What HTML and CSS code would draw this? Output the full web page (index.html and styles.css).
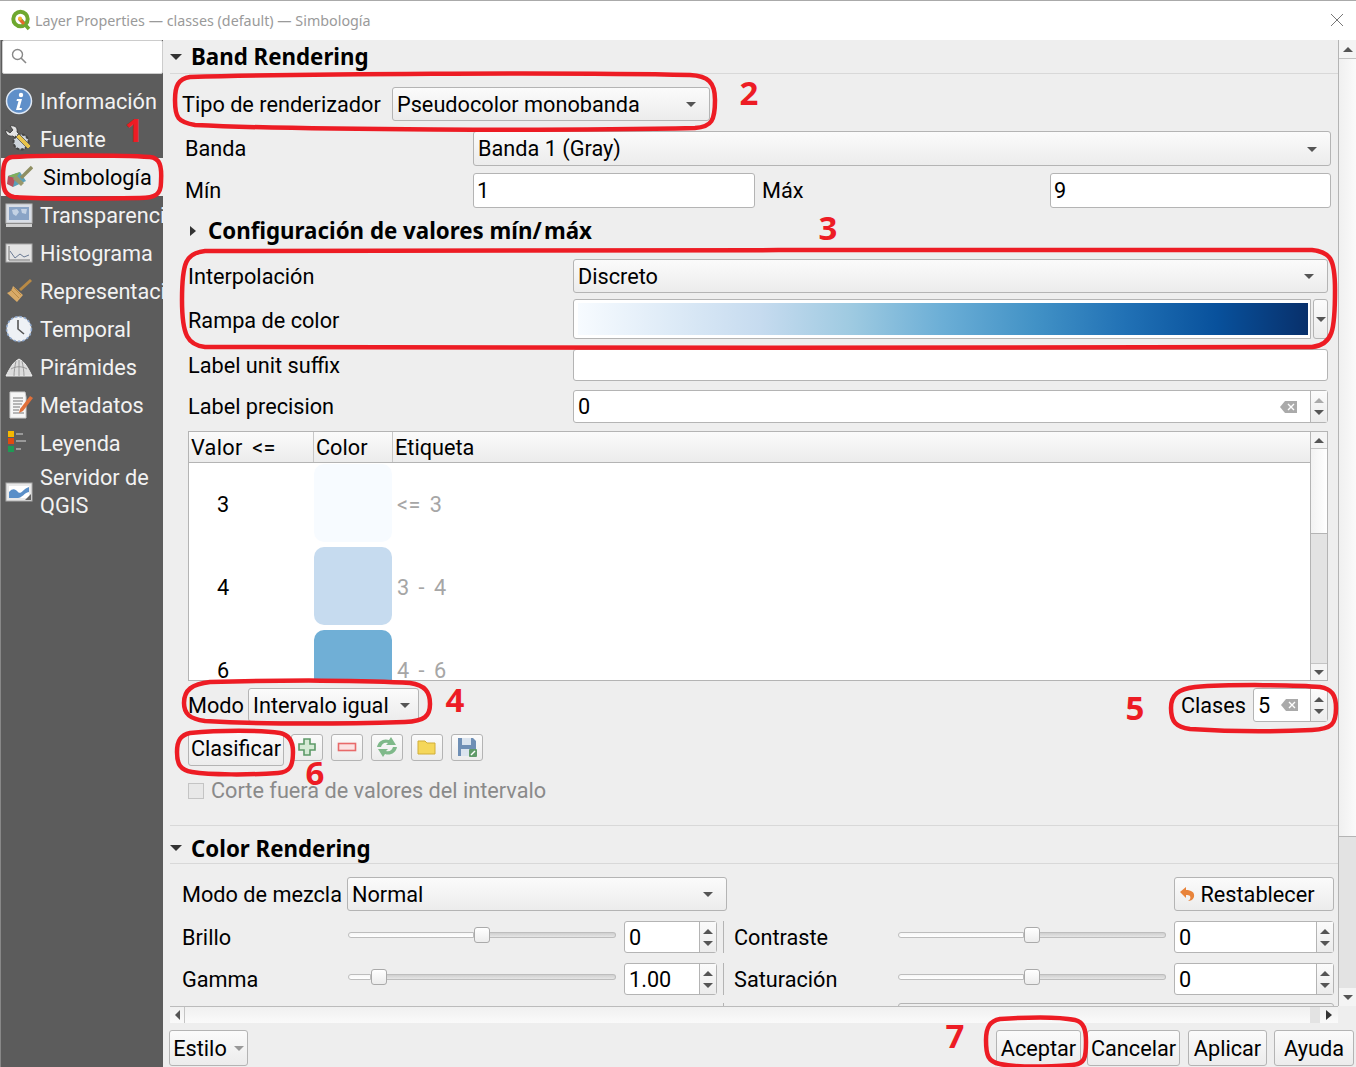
FILE: index.html
```html
<!DOCTYPE html>
<html lang="es">
<head>
    <meta charset="UTF-8">
    <title>Layer Properties</title>
    <link rel="stylesheet" href="styles.css">
</head>
<body>
<div class="window">
    <div class="titlebar">
        <svg class="qgis" width="22" height="22" viewBox="0 0 22 22">
            <circle cx="10.5" cy="10" r="7.2" fill="none" stroke="#6ea82e" stroke-width="4"/>
            <path d="M10 10l9 10" stroke="#6ea82e" stroke-width="3.5"/>
            <path d="M9 9.5l5 5.5" stroke="#e8692c" stroke-width="3"/>
            <circle cx="10" cy="9.5" r="2" fill="#f2b632"/>
        </svg>
        <span class="title">Layer Properties — classes (default) — Simbología</span>
        <svg class="close" width="14" height="14" viewBox="0 0 14 14"><path d="M1 1l12 12M13 1L1 13" stroke="#777" fill="none"/></svg>
    </div>
    <div class="dialog">
        <div class="sidebar">
            <div class="search">
                <svg width="18" height="18" viewBox="0 0 18 18"><circle cx="7.5" cy="7.5" r="5" fill="none" stroke="#888" stroke-width="1.4"/><path d="M11 11l5 5" stroke="#888" stroke-width="1.6"/></svg>
            </div>
            <ul class="menu">
                <li>
                    <svg class="ico" viewBox="0 0 28 28"><circle cx="14" cy="14" r="12.5" fill="#5f8fc9" stroke="#dfe8f4" stroke-width="1.5"/><circle cx="16" cy="8" r="2.2" fill="#fff"/><path d="M12 12h5l-2.5 9h2.5l-.6 2h-5.4l2.5-9h-2z" fill="#fff"/></svg>
                    <span>Información</span>
                </li>
                <li>
                    <svg class="ico" viewBox="0 0 28 28"><path d="M1 5l4 3 3-3-3-4c4-1 8 1 7 6l6 6-4 4-6-6C4 12 0 9 1 5z" fill="#e4e4e4" stroke="#333" stroke-width=".8"/><circle cx="16" cy="17" r="7.5" fill="#cfd6dd" stroke="#444" stroke-dasharray="3 1.5" stroke-width="2"/><path d="M11 12l12 12 3-3-12-12z" fill="#e8c34a" stroke="#555" stroke-width=".8"/></svg>
                    <span>Fuente</span>
                </li>
                <li class="selected">
                    <svg class="ico" viewBox="0 0 28 28"><path d="M3 13l12-4 6 9-13 6z" fill="#5aa0b8"/><path d="M3 13l7 2-2 9-6-3z" fill="#b8505c"/><path d="M3 13l12-4-4 6z" fill="#7fb05a"/><path d="M16 15L27 4" stroke="#8f8f62" stroke-width="3.4"/><path d="M11 12l8 8-3 3-8-7z" fill="#99986c"/></svg>
                    <span>Simbología</span>
                </li>
                <li>
                    <svg class="ico" viewBox="0 0 28 28"><rect x="1" y="3" width="26" height="19" fill="#d9dee6" stroke="#bbb"/><path d="M4 6h20v13H4z" fill="#8aa4c6"/><path d="M7 9l5-1 2 3-3 4-3-2zM16 8h6l-1 5-4-1z" fill="#c4d2e4"/><rect x="1" y="23" width="26" height="3" fill="#d0d0d0"/></svg>
                    <span>Transparencia</span>
                </li>
                <li>
                    <svg class="ico" viewBox="0 0 28 28"><rect x="1" y="5" width="26" height="18" fill="#e4e4e4" stroke="#aaa"/><path d="M4 7v14h21" fill="none" stroke="#777"/><path d="M5 12l5 7 5-4 4 3 5-2" fill="none" stroke="#6a7a94"/></svg>
                    <span>Histograma</span>
                </li>
                <li>
                    <svg class="ico" viewBox="0 0 28 28"><path d="M15 13L26 3" stroke="#b98a45" stroke-width="3"/><path d="M8 9l10 9-6 7-10-9c3-1 5-3 6-7z" fill="#d8aa68"/><path d="M6 13l8 8M9 11l7 7" stroke="#b98a45"/></svg>
                    <span>Representación</span>
                </li>
                <li>
                    <svg class="ico" viewBox="0 0 28 28"><circle cx="14" cy="14" r="12.4" fill="#eef1f5" stroke="#8fa8cc" stroke-width="1.6" stroke-dasharray="2.5 2"/><path d="M13 5v9l6 5" fill="none" stroke="#555" stroke-width="1.6"/></svg>
                    <span>Temporal</span>
                </li>
                <li>
                    <svg class="ico" viewBox="0 0 28 28"><path d="M1 23C4 17 7 11 11 8l3-2 3 2c4 3 7 9 10 15z" fill="#dcdcdc" stroke="#eee"/><path d="M11 8c-1 5-2 10-2 15M17 8c1 5 2 10 2 15M6 16c5-3 11-3 16 0M14 7v16" stroke="#8c8c8c" stroke-width=".8" fill="none"/></svg>
                    <span>Pirámides</span>
                </li>
                <li>
                    <svg class="ico" viewBox="0 0 28 28"><path d="M5 1h15l1 5v21H5z" fill="#f6f6f6" stroke="#ccc"/><path d="M8 7h10M8 10h10M8 13h9M8 16h7M8 19h6M8 22h11" stroke="#777"/><path d="M15 18L25 5l3 2-10 13-4 2z" fill="#e0703a"/></svg>
                    <span>Metadatos</span>
                </li>
                <li>
                    <svg class="ico" viewBox="0 0 28 28"><rect x="3" y="2" width="6" height="6" fill="#f5b800"/><rect x="3" y="9" width="6" height="6" fill="#e04a10"/><rect x="3" y="17" width="6" height="6" fill="#1f9a55"/><path d="M11 5h7M11 12h10M11 20h5" stroke="#999" stroke-width="2"/></svg>
                    <span>Leyenda</span>
                </li>
                <li class="two-lines">
                    <svg class="ico" viewBox="0 0 28 28"><rect x="1" y="5" width="26" height="18" fill="#e9e9e9" stroke="#aaa"/><path d="M4 8h20v12H4z" fill="#fff"/><path d="M4 14c4-4 6-3 9 0s5-3 11-5v5c-5 1-7 6-11 6H4z" fill="#5a8fc8"/><path d="M20 22l6-6v6z" fill="#666"/></svg>
                    <span>Servidor de QGIS</span>
                </li>
            </ul>
        </div>
        <div class="content">
            <div class="scroll-area">
                <div class="panel">
                    <div class="group-title first"><i class="tri-down big"></i><b>Band Rendering</b></div>

                    <div class="row h34 mt13 in-tipo">
                        <label class="lb-tipo">Tipo de renderizador</label>
                        <div class="select sel-tipo">Pseudocolor monobanda<i class="tri-down"></i></div>
                    </div>
                    <div class="row h35 mt10 in-band">
                        <label class="lb-band">Banda</label>
                        <div class="select grow">Banda 1 (Gray)<i class="tri-down"></i></div>
                    </div>
                    <div class="row h35 mt7 in-band">
                        <label class="lb-band">Mín</label>
                        <div class="input inp-min">1</div>
                        <label class="lb-max">Máx</label>
                        <div class="input grow">9</div>
                    </div>
                    <div class="row h23 mt11 in-conf"><i class="tri-right"></i><b>Configuración de valores mín/&#8202;máx</b></div>

                    <div class="row h34 mt17 in-int">
                        <label class="lb-int">Interpolación</label>
                        <div class="select grow">Discreto<i class="tri-down"></i></div>
                    </div>
                    <div class="row h40 mt6 in-int">
                        <label class="lb-int lb-ramp">Rampa de color</label>
                        <div class="ramp"><div class="ramp-fill"></div></div>
                        <div class="ramp-btn"><i class="tri-down"></i></div>
                    </div>
                    <div class="row h32 mt10 in-int">
                        <label class="lb-int">Label unit suffix</label>
                        <div class="input grow"></div>
                    </div>
                    <div class="row h33 mt9 in-int">
                        <label class="lb-int">Label precision</label>
                        <div class="input grow spin">
                            <span class="spin-val">0</span>
                            <svg class="clear" width="18" height="14" viewBox="0 0 18 14"><path d="M5 1h12v12H5L0 7z" fill="#aaa"/><path d="M8 4l6 6M14 4l-6 6" stroke="#fff" stroke-width="1.4"/></svg>
                            <div class="spin-btns"><i class="tri-up gray"></i><i class="tri-down"></i></div>
                        </div>
                    </div>

                    <div class="table mt8 in-int">
                        <div class="table-main">
                            <div class="thead">
                                <div class="th col-val">Valor &lt;=</div>
                                <div class="th col-color">Color</div>
                                <div class="th col-label">Etiqueta</div>
                            </div>
                            <div class="tbody">
                                <div class="tr"><div class="col-val td-val">3</div><div class="col-color"><div class="swatch c1"></div></div><div class="td-label">&lt;= 3</div></div>
                                <div class="tr"><div class="col-val td-val">4</div><div class="col-color"><div class="swatch c2"></div></div><div class="td-label">3 - 4</div></div>
                                <div class="tr"><div class="col-val td-val">6</div><div class="col-color"><div class="swatch c3"></div></div><div class="td-label">4 - 6</div></div>
                            </div>
                        </div>
                        <div class="vbar">
                            <div class="vbar-btn top"><i class="tri-up"></i></div>
                            <div class="vbar-thumb"></div>
                            <div class="vbar-track"></div>
                            <div class="vbar-btn bottom"><i class="tri-down"></i></div>
                        </div>
                    </div>

                    <div class="row h34 mt7 in-int">
                        <label class="lb-modo">Modo</label>
                        <div class="select sel-modo">Intervalo igual<i class="tri-down"></i></div>
                        <label class="lb-clases">Clases</label>
                        <div class="input spin spin-clases">
                            <span class="spin-val">5</span>
                            <svg class="clear" width="18" height="14" viewBox="0 0 18 14"><path d="M5 1h12v12H5L0 7z" fill="#aaa"/><path d="M8 4l6 6M14 4l-6 6" stroke="#fff" stroke-width="1.4"/></svg>
                            <div class="spin-btns"><i class="tri-up"></i><i class="tri-down"></i></div>
                        </div>
                    </div>
                    <div class="row h35 mt9 in-int">
                        <div class="btn btn-class">Clasificar</div>
                        <div class="tool">
                            <svg width="20" height="20" viewBox="0 0 20 20"><path d="M7 2h6v5h5v6h-5v5H7v-5H2V7h5z" fill="#d5ead5" stroke="#5d9a68" stroke-width="1.6"/></svg>
                        </div>
                        <div class="tool">
                            <svg width="20" height="20" viewBox="0 0 20 20"><rect x="1.5" y="6.5" width="17" height="7" fill="#fbe3e3" stroke="#e86a6a" stroke-width="1.6"/></svg>
                        </div>
                        <div class="tool">
                            <svg width="24" height="22" viewBox="0 0 24 22"><path d="M2 11C3 5 9 2 14 4l2-3 5 8H11l2-2C9 6 7 8 6 11z" fill="#7fb98a"/><path d="M22 11c-1 6-7 9-12 7l-2 3-5-8h10l-2 2c4 1 6-1 7-4z" fill="#7fb98a"/></svg>
                        </div>
                        <div class="tool">
                            <svg width="20" height="20" viewBox="0 0 20 20"><path d="M1 4h7l2 2h8v11H1z" fill="#f5d75a" stroke="#d1ae39"/></svg>
                        </div>
                        <div class="tool">
                            <svg width="20" height="20" viewBox="0 0 20 20"><path d="M1 1h15l3 3v15H1z" fill="#6f8fb5"/><path d="M5 1h9v7H5z" fill="#dbe4ee"/><path d="M4 12h10v7H4z" fill="#dbe4ee"/><rect x="12" y="12" width="8" height="8" rx="1" fill="#5f9a68"/><path d="M14 18l4-4" stroke="#fff" stroke-width="1.5"/></svg>
                        </div>
                    </div>
                    <div class="row h23 mt13 in-int disabled">
                        <i class="check"></i><span>Corte fuera de valores del intervalo</span>
                    </div>

                    <div class="group-title second"><i class="tri-down big"></i><b>Color Rendering</b></div>

                    <div class="row h34 mt13 in-color">
                        <label class="lb-mix">Modo de mezcla</label>
                        <div class="select sel-mix">Normal<i class="tri-down"></i></div>
                        <div class="btn btn-reset">
                            <svg width="18" height="16" viewBox="0 0 18 16"><path d="M1 6l6-5v3c5 0 9 2 8 7-1 3-4 4-6 4 2-1 3-3 2-5-1-1-2-1-4-1v3z" fill="#e8833a"/></svg>
                            Restablecer
                        </div>
                    </div>
                    <div class="row h32 mt10 in-color">
                        <label class="lb-mix2">Brillo</label>
                        <div class="slider"><div class="slider-fill s-half"></div><i class="handle"></i><div class="slider-rest"></div></div>
                        <div class="input spin spin-small"><span class="spin-val">0</span><div class="spin-btns"><i class="tri-up"></i><i class="tri-down"></i></div></div>
                        <div class="sep"></div>
                        <label class="lb-right">Contraste</label>
                        <div class="slider"><div class="slider-fill s-half"></div><i class="handle"></i><div class="slider-rest"></div></div>
                        <div class="input spin spin-big"><span class="spin-val">0</span><div class="spin-btns"><i class="tri-up"></i><i class="tri-down"></i></div></div>
                    </div>
                    <div class="row h32 mt10 in-color">
                        <label class="lb-mix2">Gamma</label>
                        <div class="slider"><div class="slider-fill s-low"></div><i class="handle"></i><div class="slider-rest"></div></div>
                        <div class="input spin spin-small"><span class="spin-val">1.00</span><div class="spin-btns"><i class="tri-up"></i><i class="tri-down"></i></div></div>
                        <div class="sep"></div>
                        <label class="lb-right">Saturación</label>
                        <div class="slider"><div class="slider-fill s-half"></div><i class="handle"></i><div class="slider-rest"></div></div>
                        <div class="input spin spin-big"><span class="spin-val">0</span><div class="spin-btns"><i class="tri-up"></i><i class="tri-down"></i></div></div>
                    </div>
                    <div class="row h32 mt8 in-color">
                        <label class="lb-mix2"></label>
                        <div class="slider"></div>
                        <div class="spin-small blank"></div>
                        <div class="sep"></div>
                        <label class="lb-right"></label>
                        <div class="cut-box"></div>
                    </div>
                </div>
                <div class="main-vbar">
                    <div class="main-btn"><i class="tri-up"></i></div>
                    <div class="main-thumb"></div>
                    <div class="main-track"></div>
                    <div class="main-btn"><i class="tri-down"></i></div>
                </div>
            </div>
            <div class="hbar">
                <div class="hbar-btn left"><i class="tri-left"></i></div>
                <div class="hbar-thumb"></div>
                <div class="hbar-track"></div>
                <div class="hbar-btn right"><i class="tri-right"></i></div>
            </div>
            <div class="buttons">
                <div class="btn btn-style">Estilo<i class="tri-down gray"></i></div>
                <div class="btn b-ok">Aceptar</div>
                <div class="btn b-cancel">Cancelar</div>
                <div class="btn b-apply">Aplicar</div>
                <div class="btn b-help">Ayuda</div>
            </div>
        </div>
    </div>

    <!-- red marks drawn on the screenshot -->
    <svg class="marks" width="1356" height="1067" viewBox="0 0 1356 1067">
        <g fill="none" stroke="#ed1c24" stroke-width="4.5">
            <path d="M12 157C50 155 120 155 150 157C160 158 162 166 161 182C161 194 156 198 140 198C90 199 40 199 14 197C4 195 3 188 3 176C3 164 5 158 12 157z"/>
            <path d="M190 77C300 74 560 72 690 75C708 76 715 82 715 100C715 120 712 127 695 128C560 131 300 130 195 125C178 122 175 118 175 100C175 86 178 79 190 77z"/>
            <path d="M205 251C500 250 1000 250 1312 250C1330 252 1335 258 1335 290C1335 330 1333 345 1312 347C1000 348 500 348 205 347C188 345 182 336 182 300C182 262 186 253 205 251z"/>
            <path d="M210 682C280 680 370 680 410 683C425 685 430 692 430 704C430 716 425 721 405 722C340 724 260 724 205 721C190 719 184 714 184 703C184 690 192 684 210 682z"/>
            <path d="M1195 687C1230 684 1300 685 1320 687C1332 689 1336 695 1336 708C1336 724 1332 729 1312 730C1270 732 1220 731 1190 729C1176 727 1171 722 1171 708C1171 695 1178 689 1195 687z"/>
            <path d="M190 733C220 730 260 730 280 733C290 735 293 742 293 752C293 766 290 772 278 773C250 775 210 775 192 772C180 770 177 764 177 752C177 740 181 735 190 733z"/>
            <path d="M1000 1019C1030 1017 1060 1017 1075 1020C1084 1022 1086 1030 1086 1042C1086 1058 1085 1064 1072 1065C1045 1067 1015 1067 1000 1064C988 1062 986 1055 986 1040C986 1027 990 1021 1000 1019z"/>
        </g>
        <g class="mark-num">
            <text x="134" y="142">1</text>
            <text x="749" y="105">2</text>
            <text x="828" y="240">3</text>
            <text x="455" y="712">4</text>
            <text x="1135" y="720">5</text>
            <text x="315" y="785">6</text>
            <text x="955" y="1048">7</text>
        </g>
    </svg>
</div>
</body>
</html>
```

FILE: styles.css
```css
*{
    margin:0;
    padding:0;
    box-sizing:border-box;
}
html, body{
    width:1356px;
    height:1067px;
    overflow:hidden;
}
body{
    font-family:Roboto,"Noto Sans",sans-serif;
    font-size:21.7px;
    color:#000;
    background:#eee;
}
li{
    list-style:none;
}
b{
    font-family:"Noto Sans",sans-serif;
    font-size:22.3px;
}
.window{
    position:relative;
    width:1356px;
    height:1067px;
    display:flex;
    flex-direction:column;
    overflow:hidden;
    border-top:1px solid #aaa;
}
.titlebar{
    height:39px;
    flex:none;
    background:#fff;
    display:flex;
    align-items:center;
    padding:0 12px 1px 10px;
}
.title{
    margin-left:3px;
    font-family:"Noto Sans",sans-serif;
    font-size:14.3px;
    color:#9a9a9a;
}
.close{
    margin-left:auto;
}
.dialog{
    flex:1;
    display:flex;
    min-height:0;
}

/* left menu */
.sidebar{
    width:163px;
    flex:none;
    background:#5c5c5c;
    border-left:1px solid #888;
}
.search{
    height:34px;
    margin:0 0 0 1px;
    background:#fff;
    border:1px solid #ccc;
    border-radius:2px;
    padding:6px 0 0 7px;
}
.search svg{
    display:block;
}
.menu{
    margin-top:8px;
}
.menu li{
    height:38px;
    display:flex;
    align-items:center;
    color:#f2f2f2;
    white-space:nowrap;
    overflow:hidden;
}
.menu .ico{
    width:28px;
    height:28px;
    flex:none;
    margin:0 7px 0 4px;
}
.menu .selected{
    background:#eee;
    color:#000;
}
.menu .selected .ico{
    margin-right:10px;
}
.menu .two-lines{
    height:56px;
    margin-top:2px;
    white-space:normal;
    line-height:28px;
}
.menu li span{
    display:block;
}

/* right side */
.content{
    flex:1;
    min-width:0;
    display:flex;
    flex-direction:column;
}
.scroll-area{
    height:966px;
    flex:none;
    display:flex;
}
.panel{
    flex:1;
    min-width:0;
    padding-left:7px;
    overflow:hidden;
}
.group-title{
    display:flex;
    align-items:center;
    border-bottom:1px solid #d8d8d8;
}
.group-title b{
    margin-left:9px;
}
.group-title.first{
    height:34px;
}
.group-title.second{
    height:39px;
    padding-top:7px;
    margin-top:23px;
    border-top:1px solid #d8d8d8;
}
.row{
    display:flex;
    align-items:center;
}
.h23{height:23px;}
.h32{height:32px;}
.h33{height:33px;}
.h34{height:34px;}
.h35{height:35px;}
.h40{height:40px;}
.mt6{margin-top:6px;}
.mt7{margin-top:7px;}
.mt8{margin-top:8px;}
.mt9{margin-top:9px;}
.mt10{margin-top:10px;}
.mt11{margin-top:11px;}
.mt13{margin-top:13px;}
.mt17{margin-top:17px;}
.in-tipo{margin-left:12px;}
.in-band{margin-left:15px;margin-right:7px;}
.in-conf{margin-left:20px;}
.in-conf b{
    margin-left:12px;
}
.in-int{margin-left:18px;margin-right:10px;}
.in-color{margin-left:12px;margin-right:4px;}
.grow{flex:1;min-width:0;}
.lb-tipo{width:210px;flex:none;}
.lb-band{width:288px;flex:none;}
.lb-max{width:295px;flex:none;padding-left:7px;}
.lb-int{width:385px;flex:none;}
.lb-ramp{padding-top:3px;}
.lb-modo{width:60px;flex:none;padding-top:1px;}
.lb-clases{margin-left:auto;margin-right:7px;padding-top:1px;}
.lb-mix{width:165px;flex:none;white-space:nowrap;}
.lb-mix2{width:166px;flex:none;}
.lb-right{width:174px;flex:none;padding-left:10px;}

/* widgets */
.select, .btn, .tool, .ramp-btn{
    border:1px solid #b4b4b4;
    border-radius:3px;
    background:linear-gradient(#fbfbfb,#ececec);
}
.select{
    position:relative;
    height:100%;
    display:flex;
    align-items:center;
    padding-left:4px;
}
.select .tri-down{
    position:absolute;
    right:13px;
    top:50%;
    margin-top:-2px;
}
.sel-tipo{width:318px;}
.sel-modo{width:171px;}
.sel-modo .tri-down{right:8px;}
.sel-mix{width:380px;}
.input{
    height:100%;
    background:#fff;
    border:1px solid #b4b4b4;
    border-radius:3px;
    padding-left:3px;
    display:flex;
    align-items:center;
}
.inp-min{width:282px;flex:none;}
.spin{
    padding-left:4px;
    position:relative;
}
.spin-val{flex:1;}
.spin-btns{
    width:17px;
    height:100%;
    flex:none;
    border-left:1px solid #b4b4b4;
    background:linear-gradient(#fbfbfb,#ececec);
    display:flex;
    flex-direction:column;
    align-items:center;
    justify-content:center;
    gap:7px;
}
.clear{
    margin-right:12px;
    flex:none;
}
.spin-clases{
    width:75px;
    flex:none;
}
.spin-clases .clear{
    margin-right:11px;
}
.spin-small{
    width:93px;
    margin-left:8px;
    flex:none;
}
.spin-big{
    width:160px;
    flex:none;
    margin-left:8px;
}
.tri-down, .tri-up, .tri-left, .tri-right{
    display:inline-block;
    width:0;
    height:0;
    flex:none;
    border-style:solid;
    border-color:transparent;
}
.tri-down{
    border-width:5px 5px 0;
    border-top-color:#555;
}
.tri-up{
    border-width:0 5px 5px;
    border-bottom-color:#555;
}
.tri-left{
    border-width:5px 5px 5px 0;
    border-right-color:#555;
}
.tri-right{
    border-width:5px 0 5px 6px;
    border-left-color:#333;
}
.tri-down.big{
    border-width:6px 6px 0;
    border-top-color:#333;
}
.tri-up.gray{
    border-bottom-color:#aaa;
}
.tri-down.gray{
    border-top-color:#999;
    margin-left:7px;
}
.ramp{
    flex:1;
    height:100%;
    background:#fff;
    border:1px solid #b4b4b4;
    border-radius:3px 0 0 3px;
    padding:3px 2px 3px 4px;
}
.ramp-fill{
    height:100%;
    background:linear-gradient(to right,#f7fbff,#deebf7 12.5%,#c6dbef 25%,#9ecae1 37.5%,#6baed6 50%,#4292c6 62.5%,#2171b5 75%,#08519c 87.5%,#08306b);
}
.ramp-btn{
    width:15px;
    height:100%;
    margin-left:2px;
    flex:none;
    display:flex;
    align-items:center;
    justify-content:center;
}

/* class table */
.table{
    height:250px;
    display:flex;
    background:#fff;
    border:1px solid #b4b4b4;
}
.table-main{
    flex:1;
    min-width:0;
    overflow:hidden;
}
.thead{
    height:31px;
    display:flex;
    background:linear-gradient(#fbfbfb,#ececec);
    border-bottom:1px solid #b4b4b4;
}
.th{
    border-right:1px solid #c8c8c8;
    padding-left:2px;
    line-height:32px;
}
.th.col-val{
    word-spacing:4px;
    letter-spacing:.3px;
}
.col-val{
    width:125px;
    flex:none;
}
.col-color{
    width:79px;
    flex:none;
}
.th.col-label{
    flex:1;
    border-right:none;
}
.tr{
    height:83px;
    display:flex;
    align-items:center;
}
.td-val{
    padding-left:28px;
}
.td-label{
    color:#a6a6a6;
    padding-left:4px;
    word-spacing:3px;
    letter-spacing:.5px;
}
.swatch{
    width:78px;
    height:78px;
    margin-bottom:3px;
    border-radius:10px;
}
.c1{background:#f7fbff;}
.c2{background:#c6dbef;}
.c3{background:#70afd6;}
.vbar{
    width:17px;
    flex:none;
    display:flex;
    flex-direction:column;
    border-left:1px solid #b4b4b4;
}
.vbar-btn{
    height:17px;
    flex:none;
    display:flex;
    align-items:center;
    justify-content:center;
    background:#f4f4f4;
}
.vbar-btn.top{
    border-bottom:1px solid #c4c4c4;
}
.vbar-btn.bottom{
    border-top:1px solid #c4c4c4;
}
.vbar-thumb{
    height:85px;
    flex:none;
    background:linear-gradient(to right,#f2f2f2,#fff);
    border-bottom:1px solid #b4b4b4;
}
.vbar-track{
    flex:1;
    background:#e3e3e3;
}

/* buttons */
.btn{
    height:100%;
    display:flex;
    align-items:center;
    justify-content:center;
}
.btn-class{
    width:96px;
    flex:none;
    margin-right:7px;
}
.tool{
    width:32px;
    height:27px;
    margin:0 8px 3px 0;
    flex:none;
    display:flex;
    align-items:center;
    justify-content:center;
}
.disabled{
    color:#8a8a8a;
}
.check{
    width:16px;
    height:16px;
    margin:0 7px 0 0;
    background:#e8e8e8;
    border:1px solid #c4c4c4;
    flex:none;
}
.btn-reset{
    width:160px;
    margin-left:auto;
    gap:3px;
    padding-right:14px;
}

/* sliders */
.slider{
    width:268px;
    height:6px;
    flex:none;
    display:flex;
    align-items:center;
    position:relative;
    margin-top:-4px;
}
.slider-fill{
    height:6px;
    background:linear-gradient(#f6f6f6,#fff);
    border:1px solid #bdbdbd;
    border-radius:3px 0 0 3px;
}
.s-half{width:126px;}
.s-low{width:23px;}
.slider-rest{
    flex:1;
    height:6px;
    background:linear-gradient(#cfcfcf,#e6e6e6);
    border:1px solid #bdbdbd;
    border-left:none;
    border-radius:0 3px 3px 0;
}
.handle{
    width:16px;
    height:16px;
    flex:none;
    background:linear-gradient(#fff,#ececec);
    border:1px solid #aaa;
    border-radius:3px;
}
.sep{
    width:1px;
    height:100%;
    flex:none;
    margin-left:6px;
    background:#b4b4b4;
}
.blank{
    height:100%;
}
.cut-box{
    width:436px;
    height:32px;
    flex:none;
    border:1px solid #b4b4b4;
    border-radius:3px;
}

/* outer scrollbars */
.main-vbar{
    width:18px;
    flex:none;
    display:flex;
    flex-direction:column;
    border-left:1px solid #b4b4b4;
    background:#f4f4f4;
}
.main-btn{
    height:18px;
    flex:none;
    display:flex;
    align-items:center;
    justify-content:center;
}
.main-thumb{
    height:779px;
    flex:none;
    background:linear-gradient(to right,#f0f0f0,#fafafa);
    border-top:1px solid #c4c4c4;
    border-bottom:1px solid #b4b4b4;
}
.main-track{
    flex:1;
    background:#e3e3e3;
}
.hbar{
    height:17px;
    flex:none;
    margin:0 18px 0 7px;
    display:flex;
    border-top:1px solid #bbb;
    background:linear-gradient(#f0f0f0,#fafafa);
}
.hbar-btn{
    width:15px;
    flex:none;
    display:flex;
    align-items:center;
    justify-content:center;
}
.hbar-btn.left{
    border-right:1px solid #c4c4c4;
}
.hbar-btn.right{
    width:18px;
}
.hbar-thumb{
    flex:1;
}
.hbar-track{
    width:10px;
    flex:none;
    background:#e3e3e3;
}
.buttons{
    flex:1;
    display:flex;
    padding:7px 2px 1px 6px;
}
.btn-style{
    width:79px;
}
.b-ok{
    width:85px;
    margin-left:auto;
}
.b-cancel{
    width:93px;
    margin-left:6px;
}
.b-apply{
    width:79px;
    margin-left:8px;
}
.b-help{
    width:80px;
    margin-left:7px;
}

/* annotations lying over the dialog */
.marks{
    position:absolute;
    left:0;
    top:-1px;
    pointer-events:none;
}
.mark-num text{
    font-family:"Open Sans",sans-serif;
    font-size:33px;
    font-weight:700;
    fill:#ed1c24;
    text-anchor:middle;
}
```
